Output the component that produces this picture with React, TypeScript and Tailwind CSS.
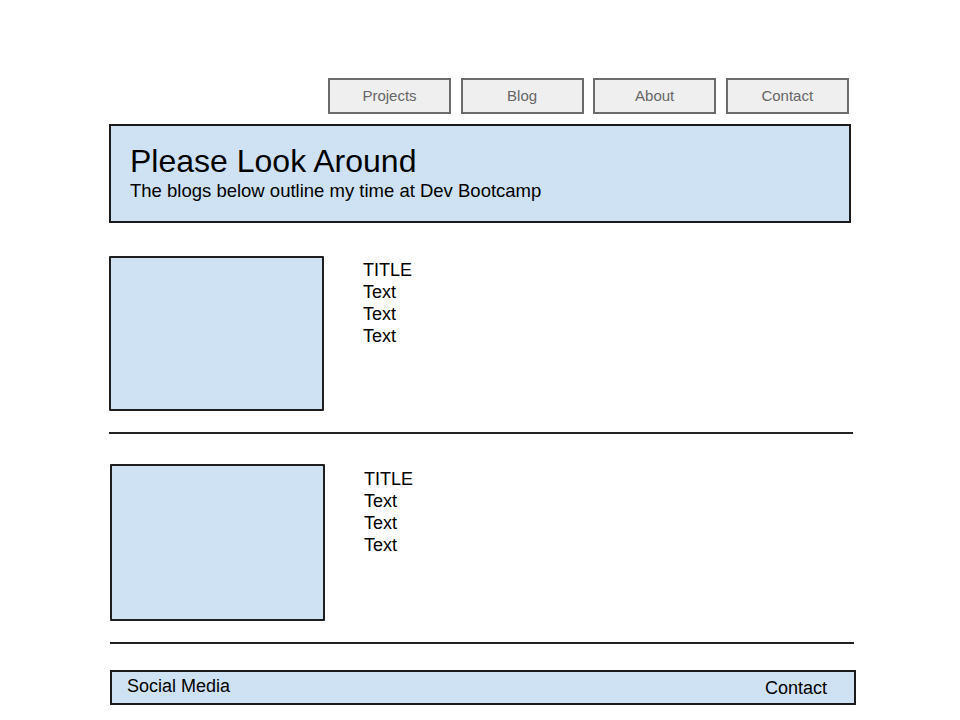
import React from "react";

const navItems = ["Projects", "Blog", "About", "Contact"];

function BlogRow({ ml, h, pt }: { ml: string; h: string; pt: string }) {
  return (
    <div className={`flex ${ml}`}>
      <div className={`w-[215px] ${h} border-2 border-[#1f1f1f] bg-[#cfe2f3] rounded-[1px]`} />
      <div className={`ml-[39px] ${pt} text-[18px] leading-[22px] text-black`}>
        <div>TITLE</div>
        <div>Text</div>
        <div>Text</div>
        <div>Text</div>
      </div>
    </div>
  );
}

export default function App() {
  return (
    <div className="w-[960px] h-[720px] bg-white overflow-hidden font-['Liberation_Sans',Arial,sans-serif]">
      <nav className="flex gap-[9.6px] pl-[328px] pt-[78px]">
        {navItems.map((item) => (
          <div
            key={item}
            className="w-[123px] h-[36px] border-2 border-[#6b6b6b] bg-[#efefef] text-[15px] text-[#666666] flex items-center justify-center"
          >
            {item}
          </div>
        ))}
      </nav>

      <header className="mt-[10px] ml-[109px] w-[742px] h-[99px] border-2 border-[#1a1a1a] bg-[#cfe2f3] pl-[19px] pt-[17px]">
        <h1 className="text-[32px] leading-[36px] text-black">Please Look Around</h1>
        <p className="mt-[1px] text-[18.5px] leading-[22px] text-black">
          The blogs below outline my time at Dev Bootcamp
        </p>
      </header>

      <div className="mt-[33px]">
        <BlogRow ml="ml-[109px]" h="h-[155px]" pt="pt-[3px]" />
      </div>
      <div className="mt-[21px] ml-[109px] w-[744px] h-[2px] bg-[#222222]" />

      <div className="mt-[30px]">
        <BlogRow ml="ml-[110px]" h="h-[157px]" pt="pt-[4px]" />
      </div>
      <div className="mt-[21px] ml-[110px] w-[744px] h-[2px] bg-[#222222]" />

      <footer className="mt-[26px] ml-[110px] w-[746px] h-[35px] border-2 border-[#1a1a1a] bg-[#cfe2f3] flex justify-between items-start pl-[15px] pr-[27px]">
        <span className="pt-[3px] text-[18px] leading-[22px] text-black">Social Media</span>
        <span className="pt-[5px] text-[18px] leading-[22px] text-black">Contact</span>
      </footer>
    </div>
  );
}
